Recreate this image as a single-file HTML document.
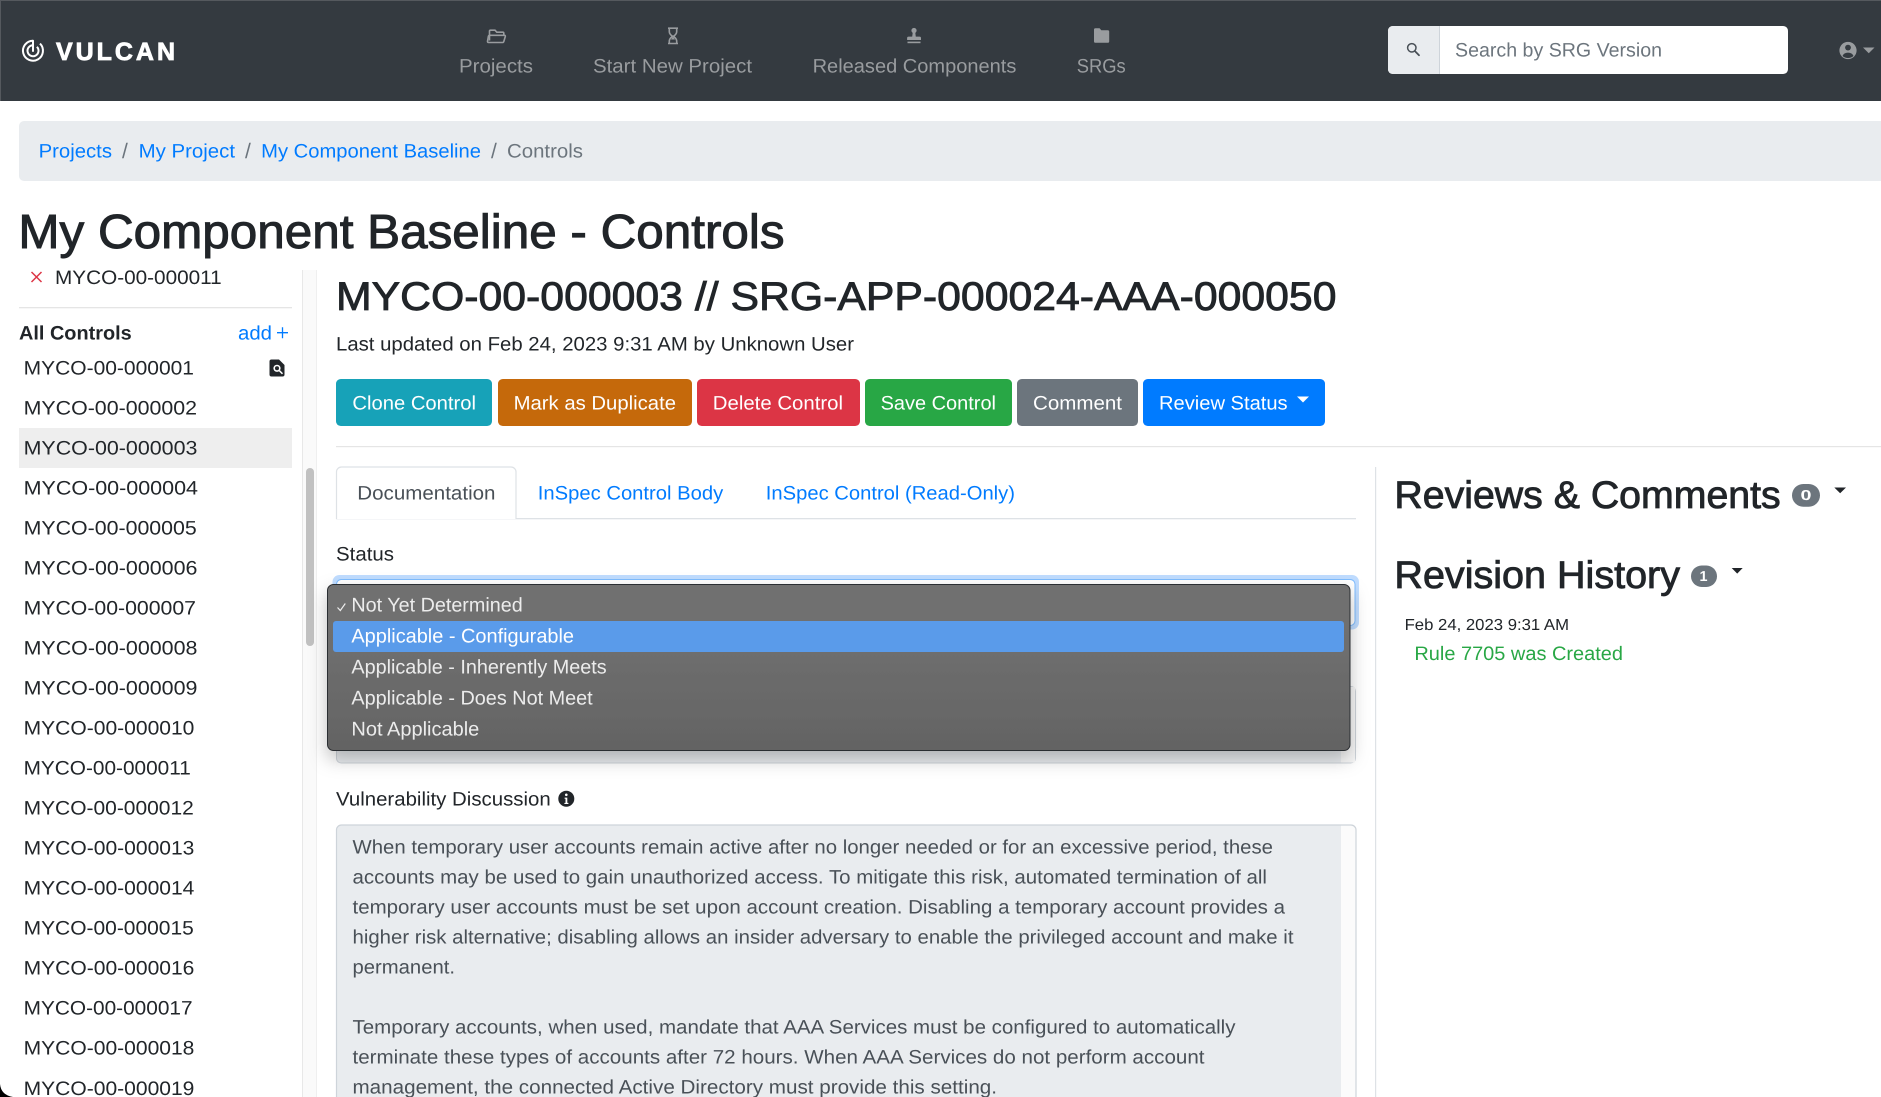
<!DOCTYPE html>
<html lang="en">
<head>
<meta charset="utf-8">
<title>My Component Baseline - Controls</title>
<style>
html,body{margin:0;padding:0;background:#fff;width:1881px;height:1097px;overflow:hidden}
svg{display:block}
text{font-family:"Liberation Sans",Arial,sans-serif;font-size:19.5px;fill:#212529;text-rendering:geometricPrecision}
.nav{fill:#999c9f}
.blue{fill:#007bff}
.w{fill:#fff}
.m{stroke:#212529;stroke-width:.55px}
.opt{fill:#ececec;font-size:19.8px}
.ta{fill:#495057}
</style>
</head>
<body>
<svg xmlns="http://www.w3.org/2000/svg" width="1881" height="1097" viewBox="0 0 1881 1097">
<defs>
<linearGradient id="dd" x1="0" y1="0" x2="0" y2="1"><stop offset="0" stop-color="#707070"/><stop offset=".4" stop-color="#6e6e6e"/><stop offset="1" stop-color="#636363"/></linearGradient>
<clipPath id="side"><rect x="0" y="270" width="300" height="827"/></clipPath>
<filter id="sh" x="-5%" y="-20%" width="110%" height="150%"><feDropShadow dx="0" dy="8" stdDeviation="9" flood-color="#000" flood-opacity=".25"/></filter>
</defs>
<rect width="1881" height="1097" fill="#fff"/>

<!-- navbar -->
<rect width="1881" height="101" fill="#343a40"/>
<rect width="1881" height="1" fill="#55595e"/>
<rect width="1" height="101" fill="#55595e"/>
<g fill="none" stroke="#fff" stroke-width="2">
<path d="M33 40.7A10 10 0 1 0 40 43.6"/>
<path d="M33 45.2A5.5 5.5 0 1 0 36.9 46.8"/>
<path d="M33 40.7V51" stroke-linecap="round"/>
</g>
<text x="56" y="60" font-weight="700" style="font-size:25px;stroke:#fff;stroke-width:.8px" class="w" textLength="119" lengthAdjust="spacing">VULCAN</text>

<g fill="none" stroke="#999c9f" stroke-width="1.6">
<path d="M489.5 40.5V31.2q0-1 1-1h4.5l1.8 2h6q1 0 1 1v2"/>
<path d="M491 42.5h11.5q1 0 1.3-1l1.5-5q.3-1.2-1-1.2h-14.5q-1.1 0-1.4 1l-.9 5q0 1.2 1 1.2z"/>
<path d="M668 28.2h10M668 43.5h10M669.3 28.5v3q0 2.3 2.4 4.2l.8.6-.8.7q-2.4 1.9-2.4 4.2v2M676.7 28.5v3q0 2.3-2.4 4.2l-.8.6.8.7q2.4 1.9 2.4 4.2v2"/>
</g>
<g fill="#999c9f">
<path d="M671 39.5l2-3 2 3z"/>
<circle cx="914" cy="30.5" r="2.6"/>
<path d="M912.8 32h2.4l.6 4.6h3.7q1.5 0 1.5 1.5v1.9h-13.9v-1.9q0-1.5 1.5-1.5h3.6z"/>
<rect x="907.5" y="41.6" width="13" height="1.6"/>
<path d="M1094 29.6q0-1.4 1.4-1.4h4.2l1.7 2h6.5q1.4 0 1.4 1.4v9.8q0 1.4-1.4 1.4h-12.4q-1.4 0-1.4-1.4z"/>
</g>
<text class="nav" x="459" y="72.5" textLength="74" lengthAdjust="spacingAndGlyphs">Projects</text>
<text class="nav" x="593" y="72.5" textLength="159" lengthAdjust="spacingAndGlyphs">Start New Project</text>
<text class="nav" x="812.6" y="72.5" textLength="203.8" lengthAdjust="spacingAndGlyphs">Released Components</text>
<text class="nav" x="1076.7" y="72.5" textLength="49" lengthAdjust="spacingAndGlyphs">SRGs</text>

<!-- search -->
<rect x="1388" y="26" width="400" height="48" rx="4.8" fill="#fff"/>
<path d="M1439.5 26H1392.8a4.8 4.8 0 0 0-4.8 4.8V69.2a4.8 4.8 0 0 0 4.8 4.8H1439.5z" fill="#e9ecef"/>
<rect x="1439" y="26" width="1" height="48" fill="#ced4da"/>
<circle cx="1411.8" cy="47.8" r="4.2" fill="none" stroke="#495057" stroke-width="1.5"/>
<path d="M1414.8 51l4.2 4.2" stroke="#495057" stroke-width="1.8" stroke-linecap="round"/>
<text x="1455" y="56.5" style="fill:#6c757d" textLength="207" lengthAdjust="spacingAndGlyphs">Search by SRG Version</text>
<circle cx="1848" cy="50.5" r="8.6" fill="#999c9f"/>
<circle cx="1848" cy="47.6" r="2.9" fill="#343a40"/>
<path d="M1842.5 56q1.3-3.4 5.5-3.4t5.5 3.4q-2.3 2-5.5 2t-5.5-2z" fill="#343a40"/>
<path d="M1863 47.5h11.5l-5.75 5.8z" fill="#999c9f"/>

<!-- breadcrumb -->
<path d="M1881 121H24a5 5 0 0 0-5 5v50a5 5 0 0 0 5 5H1881z" fill="#e9ecef"/>
<text class="blue" x="38.6" y="157.5" textLength="73.4" lengthAdjust="spacingAndGlyphs">Projects</text>
<text x="122" y="158" style="fill:#6c757d;font-size:21px">/</text>
<text class="blue" x="138.6" y="157.5" textLength="96.4" lengthAdjust="spacingAndGlyphs">My Project</text>
<text x="245" y="158" style="fill:#6c757d;font-size:21px">/</text>
<text class="blue" x="261.2" y="157.5" textLength="219.8" lengthAdjust="spacingAndGlyphs">My Component Baseline</text>
<text x="491" y="158" style="fill:#6c757d;font-size:21px">/</text>
<text x="507" y="157.5" style="fill:#6c757d" textLength="76" lengthAdjust="spacingAndGlyphs">Controls</text>

<!-- h1 -->
<text x="18.4" y="248" class="m" style="font-size:48px;stroke-width:1px" textLength="766.2" lengthAdjust="spacingAndGlyphs">My Component Baseline - Controls</text>

<!-- sidebar -->
<g clip-path="url(#side)">
<path d="M31.5 272l10 10M41.5 272l-10 10" stroke="#dc3545" stroke-width="1.5"/>
<text x="55" y="284" textLength="166.7" lengthAdjust="spacingAndGlyphs">MYCO-00-000011</text>
</g>
<rect x="19" y="307" width="273" height="1.3" fill="#e5e5e5"/>
<text x="19" y="339.5" font-weight="700" textLength="112.7" lengthAdjust="spacingAndGlyphs">All Controls</text>
<text class="blue" x="238" y="339.5" textLength="34" lengthAdjust="spacingAndGlyphs">add</text>
<path d="M277 332.7h11M282.5 327.2v11" stroke="#007bff" stroke-width="1.3"/>
<path d="M271.5 359.5h7.5l5.5 5.5v9.5q0 2-2 2h-11q-2 0-2-2v-13q0-2 2-2z" fill="#212529"/>
<circle cx="277" cy="368.3" r="3.6" fill="#fff"/><circle cx="277" cy="368.3" r="2" fill="#212529"/>
<path d="M279.5 370.8l3 3" stroke="#fff" stroke-width="1.5"/>
<rect x="19" y="428" width="273" height="40" fill="#eeeeee"/>
<g>
<text x="23.6" y="374.3" textLength="170.4" lengthAdjust="spacingAndGlyphs">MYCO-00-000001</text>
<text x="23.6" y="414.3" textLength="173.4" lengthAdjust="spacingAndGlyphs">MYCO-00-000002</text>
<text x="23.6" y="454.3" textLength="173.8" lengthAdjust="spacingAndGlyphs">MYCO-00-000003</text>
<text x="23.6" y="494.4" textLength="174.4" lengthAdjust="spacingAndGlyphs">MYCO-00-000004</text>
<text x="23.6" y="534.4" textLength="173.2" lengthAdjust="spacingAndGlyphs">MYCO-00-000005</text>
<text x="23.6" y="574.4" textLength="173.8" lengthAdjust="spacingAndGlyphs">MYCO-00-000006</text>
<text x="23.6" y="614.4" textLength="172.4" lengthAdjust="spacingAndGlyphs">MYCO-00-000007</text>
<text x="23.6" y="654.5" textLength="173.8" lengthAdjust="spacingAndGlyphs">MYCO-00-000008</text>
<text x="23.6" y="694.5" textLength="173.8" lengthAdjust="spacingAndGlyphs">MYCO-00-000009</text>
<text x="23.6" y="734.5" textLength="170.8" lengthAdjust="spacingAndGlyphs">MYCO-00-000010</text>
<text x="23.6" y="774.5" textLength="167.2" lengthAdjust="spacingAndGlyphs">MYCO-00-000011</text>
<text x="23.6" y="814.6" textLength="170.2" lengthAdjust="spacingAndGlyphs">MYCO-00-000012</text>
<text x="23.6" y="854.6" textLength="170.8" lengthAdjust="spacingAndGlyphs">MYCO-00-000013</text>
<text x="23.6" y="894.6" textLength="170.8" lengthAdjust="spacingAndGlyphs">MYCO-00-000014</text>
<text x="23.6" y="934.6" textLength="170.2" lengthAdjust="spacingAndGlyphs">MYCO-00-000015</text>
<text x="23.6" y="974.7" textLength="170.8" lengthAdjust="spacingAndGlyphs">MYCO-00-000016</text>
<text x="23.6" y="1014.7" textLength="169" lengthAdjust="spacingAndGlyphs">MYCO-00-000017</text>
<text x="23.6" y="1054.7" textLength="170.8" lengthAdjust="spacingAndGlyphs">MYCO-00-000018</text>
<text x="23.6" y="1094.8" textLength="170.8" lengthAdjust="spacingAndGlyphs">MYCO-00-000019</text>
</g>
<!-- sidebar scrollbar -->
<rect x="302" y="270" width="15" height="827" fill="#fafafa"/>
<rect x="302" y="270" width="1" height="827" fill="#e8e8e8"/>
<rect x="316" y="270" width="1" height="827" fill="#efefef"/>
<rect x="306" y="468" width="8" height="178" rx="4" fill="#c1c1c1"/>
<path d="M0 1084q1 11 13 13H0z" fill="#000"/>

<!-- main header -->
<text x="336" y="310" class="m" style="font-size:40px;stroke-width:.85px" textLength="1000.5" lengthAdjust="spacingAndGlyphs">MYCO-00-000003 // SRG-APP-000024-AAA-000050</text>
<text x="336" y="350.5" textLength="518" lengthAdjust="spacingAndGlyphs">Last updated on Feb 24, 2023 9:31 AM by Unknown User</text>

<!-- buttons -->
<rect x="336" y="379" width="156" height="47" rx="4.8" fill="#17a2b8"/>
<rect x="498" y="379" width="194" height="47" rx="4.8" fill="#c5690b"/>
<rect x="697" y="379" width="163" height="47" rx="4.8" fill="#dc3545"/>
<rect x="865" y="379" width="147" height="47" rx="4.8" fill="#28a745"/>
<rect x="1017" y="379" width="121" height="47" rx="4.8" fill="#6c757d"/>
<rect x="1143" y="379" width="182" height="47" rx="4.8" fill="#007bff"/>
<text class="w" x="352.4" y="409.5" textLength="123.6" lengthAdjust="spacingAndGlyphs">Clone Control</text>
<text class="w" x="513.6" y="409.5" textLength="162.4" lengthAdjust="spacingAndGlyphs">Mark as Duplicate</text>
<text class="w" x="712.8" y="409.5" textLength="130.2" lengthAdjust="spacingAndGlyphs">Delete Control</text>
<text class="w" x="880.6" y="409.5" textLength="115.4" lengthAdjust="spacingAndGlyphs">Save Control</text>
<text class="w" x="1033" y="409.5" textLength="89" lengthAdjust="spacingAndGlyphs">Comment</text>
<text class="w" x="1159" y="409.5" textLength="128.6" lengthAdjust="spacingAndGlyphs">Review Status</text>
<path d="M1297 396.5h12l-6 6z" fill="#fff"/>
<rect x="336" y="446" width="1545" height="1.2" fill="#e5e5e5"/>

<!-- tabs -->
<rect x="336" y="518" width="1020" height="1.3" fill="#dee2e6"/>
<path d="M336.5 519V472a5 5 0 0 1 5-5H511a5 5 0 0 1 5 5V519" fill="#fff" stroke="#dee2e6" stroke-width="1.2"/>
<text x="357.3" y="499.5" style="fill:#495057" textLength="138.2" lengthAdjust="spacingAndGlyphs">Documentation</text>
<text class="blue" x="537.8" y="499.5" textLength="185.4" lengthAdjust="spacingAndGlyphs">InSpec Control Body</text>
<text class="blue" x="765.8" y="499.5" textLength="249.2" lengthAdjust="spacingAndGlyphs">InSpec Control (Read-Only)</text>
<text x="336" y="560.5" textLength="58" lengthAdjust="spacingAndGlyphs">Status</text>

<!-- right pane -->
<rect x="1375" y="467" width="1.2" height="630" fill="#dee2e6"/>
<text x="1394.4" y="508" class="m" style="font-size:38.4px;stroke-width:.85px" textLength="386.3" lengthAdjust="spacingAndGlyphs">Reviews &amp; Comments</text>
<rect x="1792" y="484" width="28" height="22.7" rx="11.3" fill="#6c757d"/>
<text x="1800.5" y="500" font-weight="700" class="w" style="font-size:14.4px" textLength="11" lengthAdjust="spacingAndGlyphs">0</text>
<path d="M1834.3 487.5h11.7l-5.85 5.8z" fill="#212529"/>
<text x="1394.4" y="588" class="m" style="font-size:38.4px;stroke-width:.85px" textLength="285.6" lengthAdjust="spacingAndGlyphs">Revision History</text>
<rect x="1691" y="565.5" width="26" height="21.5" rx="10.7" fill="#6c757d"/>
<text x="1699.5" y="581" font-weight="700" class="w" style="font-size:14.4px" textLength="8" lengthAdjust="spacingAndGlyphs">1</text>
<path d="M1731.7 568h11l-5.5 5.6z" fill="#212529"/>
<text x="1404.6" y="630" style="font-size:16px" textLength="164.4" lengthAdjust="spacingAndGlyphs">Feb 24, 2023 9:31 AM</text>
<text x="1414.4" y="660" style="fill:#28a745" textLength="208.6" lengthAdjust="spacingAndGlyphs">Rule 7705 was Created</text>

<!-- form behind dropdown -->
<rect x="332.5" y="575" width="1026.5" height="54.5" rx="7" fill="#bfdcff"/>
<rect x="336.5" y="579.5" width="1018.5" height="46" rx="4.8" fill="#fff" stroke="#80bdff"/>
<rect x="336.5" y="686.5" width="1019" height="76.5" rx="4.8" fill="#e9ecef" stroke="#ced4da"/>
<rect x="1341" y="687" width="14" height="75.5" fill="#f7f7f7"/>

<!-- vulnerability -->
<text x="336" y="805.5" textLength="214.7" lengthAdjust="spacingAndGlyphs">Vulnerability Discussion</text>
<circle cx="566.3" cy="798.7" r="8" fill="#212529"/>
<circle cx="566.3" cy="794.8" r="1.3" fill="#fff"/>
<path d="M564.6 797.6h2.7v5.3h1.1v1.1h-4v-1.1h1.1v-4.2h-.9z" fill="#fff"/>
<path d="M336.5 1098V830a5 5 0 0 1 5-5H1351a5 5 0 0 1 5 5V1098z" fill="#e9ecef" stroke="#ced4da" stroke-width="1.2"/>
<path d="M1341 825.8h10a4.3 4.3 0 0 1 4.3 4.3V1097H1341z" fill="#fbfbfb"/>
<text class="ta" x="352.5" y="853.5" textLength="920.5" lengthAdjust="spacingAndGlyphs">When temporary user accounts remain active after no longer needed or for an excessive period, these</text>
<text class="ta" x="352.5" y="883.5" textLength="914.5" lengthAdjust="spacingAndGlyphs">accounts may be used to gain unauthorized access. To mitigate this risk, automated termination of all</text>
<text class="ta" x="352.5" y="913.5" textLength="932.5" lengthAdjust="spacingAndGlyphs">temporary user accounts must be set upon account creation. Disabling a temporary account provides a</text>
<text class="ta" x="352.5" y="943.5" textLength="941" lengthAdjust="spacingAndGlyphs">higher risk alternative; disabling allows an insider adversary to enable the privileged account and make it</text>
<text class="ta" x="352.5" y="973.5" textLength="102.5" lengthAdjust="spacingAndGlyphs">permanent.</text>
<text class="ta" x="352.5" y="1033.5" textLength="883" lengthAdjust="spacingAndGlyphs">Temporary accounts, when used, mandate that AAA Services must be configured to automatically</text>
<text class="ta" x="352.5" y="1063.5" textLength="852" lengthAdjust="spacingAndGlyphs">terminate these types of accounts after 72 hours. When AAA Services do not perform account</text>
<text class="ta" x="352.5" y="1093.5" textLength="644.5" lengthAdjust="spacingAndGlyphs">management, the connected Active Directory must provide this setting.</text>

<!-- dropdown -->
<g filter="url(#sh)"><rect x="327.5" y="584.5" width="1022.5" height="166" rx="6" fill="url(#dd)" stroke="#2b2d30"/></g>
<rect x="333" y="621" width="1011" height="31" rx="3" fill="#5a9bea"/>
<path d="M337.5 607.5l2.8 3 5-7" fill="none" stroke="#ececec" stroke-width="1.2"/>
<text class="opt" x="351.4" y="611.5" textLength="171.3" lengthAdjust="spacingAndGlyphs">Not Yet Determined</text>
<text class="opt" style="fill:#fff" x="351.4" y="642.7" textLength="222.6" lengthAdjust="spacingAndGlyphs">Applicable - Configurable</text>
<text class="opt" x="351.4" y="673.5" textLength="255.3" lengthAdjust="spacingAndGlyphs">Applicable - Inherently Meets</text>
<text class="opt" x="351.4" y="704.7" textLength="241.3" lengthAdjust="spacingAndGlyphs">Applicable - Does Not Meet</text>
<text class="opt" x="351.4" y="735.7" textLength="127.9" lengthAdjust="spacingAndGlyphs">Not Applicable</text>
</svg>
</body>
</html>
